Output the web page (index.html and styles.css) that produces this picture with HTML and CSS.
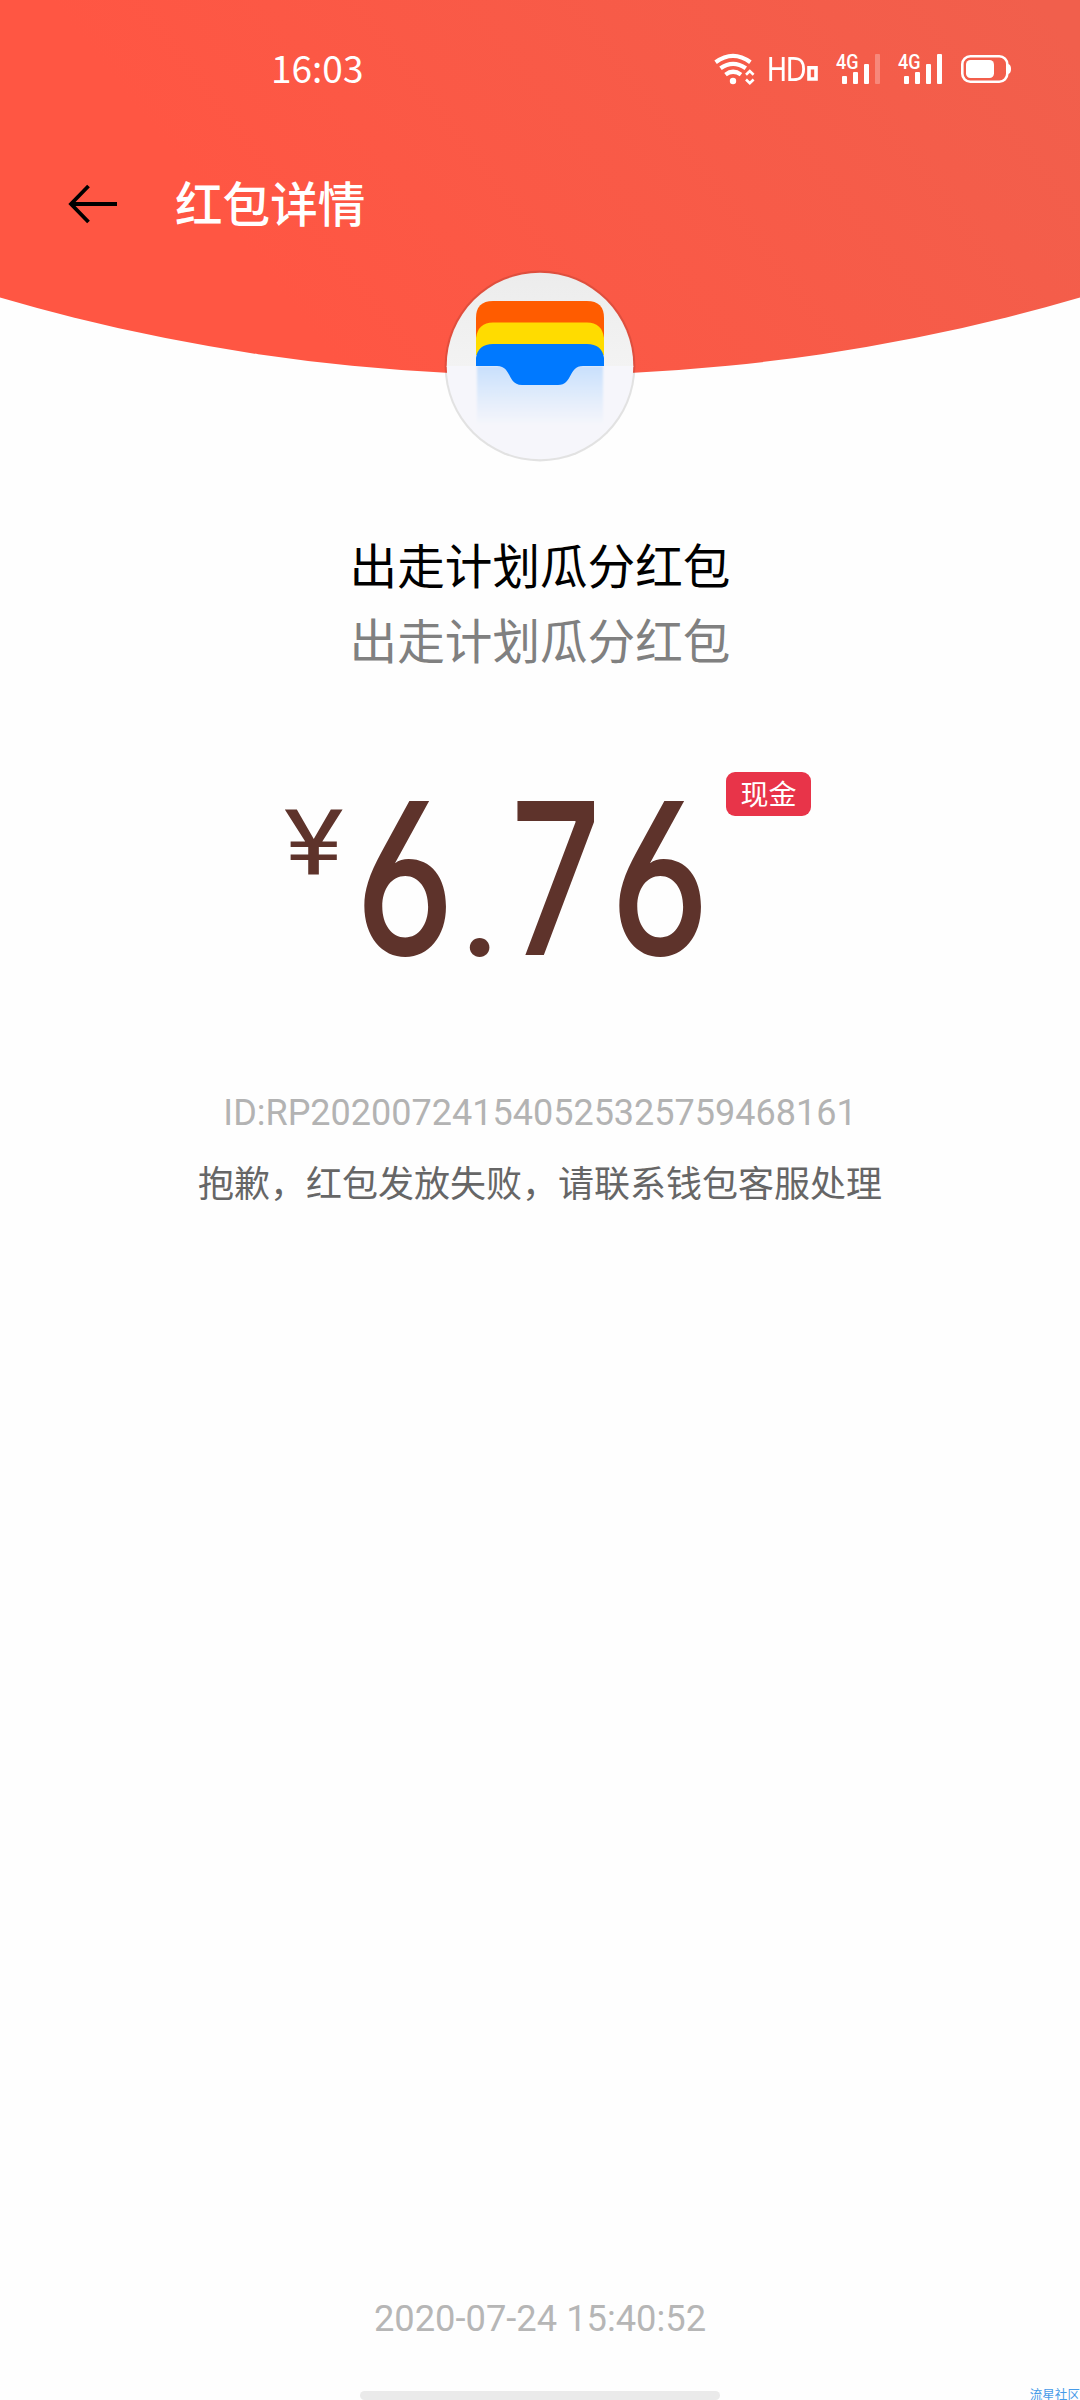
FILE: index.html
```html
<!DOCTYPE html>
<html lang="zh-CN">
<head>
<meta charset="utf-8">
<title>红包详情</title>
<link rel="stylesheet" href="styles.css">
</head>
<body>
<div class="screen">
  <header class="hero">
    <div class="status">
      <span class="clock">16:03</span>
      <svg class="status-icons" width="350" height="80" viewBox="0 0 350 80" fill="none" stroke="#fff">
        <g stroke-width="4.2">
          <path d="M25.6 32.2Q43 19.4 60.4 32.2"/>
          <path d="M30.5 38.3Q43 29.3 55.8 38.3"/>
          <path d="M35.5 44.6Q43 38.9 51 44.6"/>
        </g>
        <circle cx="43" cy="51" r="3.2" fill="#fff" stroke="none"/>
        <path d="M56 44.7L59.8 41L63.6 44.7M56 49.5L59.8 53.2L63.6 49.5" stroke-width="2.6"/>
        <path d="M80.7 27V51M93.2 27V51M80.7 38.7H93.2" stroke-width="2.8"/>
        <path d="M99.7 28.3H103.5C111 28.3 113.6 32 113.6 39C113.6 46 111 49.7 103.5 49.7H99.7Z" stroke-width="2.8"/>
        <path d="M119 37.8H126V49H119Z" stroke-width="3.6"/>
        <g class="network" fill="#fff" stroke="none">
          <text x="146" y="38.7" textLength="22.5" lengthAdjust="spacingAndGlyphs">4G</text>
          <rect x="152" y="46" width="5" height="8" rx="1"/>
          <rect x="163" y="42" width="5" height="12" rx="1"/>
          <rect x="174" y="34" width="5" height="20" rx="1"/>
          <rect x="185" y="24" width="5" height="30" rx="1" opacity=".27"/>
          <text x="208" y="38.7" textLength="22.5" lengthAdjust="spacingAndGlyphs">4G</text>
          <rect x="214" y="46" width="5" height="8" rx="1"/>
          <rect x="225" y="42" width="5" height="12" rx="1"/>
          <rect x="236" y="34" width="5" height="20" rx="1"/>
          <rect x="247" y="24" width="5" height="30" rx="1"/>
        </g>
        <rect x="272.3" y="26.3" width="45" height="25.4" rx="8" stroke-width="2.6"/>
        <rect x="276" y="30" width="28" height="18" rx="4.5" fill="#fff" stroke="none"/>
        <path d="M318 34Q321 34.5 321 39T318 44Z" fill="#fff" stroke="none"/>
      </svg>
    </div>
    <nav class="navbar">
      <svg class="back" width="50" height="40" viewBox="0 0 50 40" fill="none" stroke="#000" stroke-width="3.8">
        <path d="M49 20H3.5M20.5 2L3 20L20.5 38"/>
      </svg>
      <h1 class="nav-title">红包详情</h1>
    </nav>
  </header>

  <main class="content">
    <svg class="avatar" width="192" height="192" viewBox="0 0 192 192">
      <defs>
        <linearGradient id="fade" x1="0" y1="0" x2="0" y2="1">
          <stop offset="0" stop-color="#c8dffc"/><stop offset=".35" stop-color="#d9e8fc"/><stop offset="1" stop-color="#f5f6fb"/>
        </linearGradient>
        <linearGradient id="top" x1="0" y1="0" x2="0" y2="1">
          <stop offset="0" stop-color="#ececec"/><stop offset="1" stop-color="#f3f3f3"/>
        </linearGradient>
        <clipPath id="disc"><circle cx="96" cy="96" r="93.3"/></clipPath>
        <filter id="soft" x="-10%" y="-10%" width="120%" height="120%"><feGaussianBlur stdDeviation="1.2"/></filter>
      </defs>
      <circle cx="96" cy="96" r="95.4" fill="#000" fill-opacity=".11"/>
      <g clip-path="url(#disc)">
        <rect width="192" height="97" fill="url(#top)"/>
        <rect y="96" width="192" height="96" fill="#f6f6fb"/>
        <rect x="33" y="96" width="126" height="58" fill="url(#fade)" filter="url(#soft)"/>
        <path d="M32 75V48Q32 31 49 31H143Q160 31 160 48V75Z" fill="#ff5c00"/>
        <path d="M32 85V68Q34 52.5 49 52.5H143Q158 52.5 160 68V85Z" fill="#ffdc00"/>
        <path d="M32 96V88Q34 74 49 74H143Q158 74 160 88V96H139C124 96 129 115 114 115H78C63 115 68 96 53 96Z" fill="#0079ff"/>
      </g>
    </svg>
    <h2 class="sender">出走计划瓜分红包</h2>
    <p class="wish">出走计划瓜分红包</p>
    <div class="amount">
      <svg class="sum" width="430" height="170" viewBox="0 0 430 170">
        <text class="yen" x="4" y="80" textLength="59.5" lengthAdjust="spacingAndGlyphs">¥</text>
        <text class="digit" transform="translate(75 161) scale(.802 1)">6</text>
        <text class="digit point" transform="translate(179 162) scale(1.03 1)">.</text>
        <text class="digit" transform="translate(230.6 161) scale(.751 1)">7</text>
        <text class="digit" transform="translate(330 161) scale(.802 1)">6</text>
      </svg>
      <span class="tag">现金</span>
    </div>
    <p class="order">ID:RP202007241540525325759468161</p>
    <p class="message">抱歉，红包发放失败，请联系钱包客服处理</p>
  </main>

  <footer class="footer">
    <time class="date">2020-07-24 15:40:52</time>
    <div class="home-bar"></div>
    <span class="watermark">流星社区</span>
  </footer>
</div>
</body>
</html>
```
FILE: styles.css
```css
* { box-sizing: border-box; margin: 0; padding: 0; }

body {
  background: #fefefe;
  font-family: Roboto, "Noto Sans CJK SC", sans-serif;
}

.screen {
  position: relative;
  width: 1080px;
  height: 2400px;
  display: flex;
  flex-direction: column;
  overflow: hidden;
}

.hero {
  height: 375px;
  flex: none;
  background: linear-gradient(52deg, #ff5643 25%, #f15f4c 97%);
  clip-path: circle(1920px at 50% -1545px);
}

.status {
  display: flex;
  justify-content: space-between;
  height: 110px;
  padding: 30px 40px 0 271px;
}

.clock {
  margin-top: -3px;
  color: #fff;
  font: 37px/80px "Noto Sans CJK SC", sans-serif;
}

.network { font: 500 21px Roboto, sans-serif; }

.navbar {
  display: flex;
  align-items: center;
  gap: 57px;
  height: 188px;
  padding: 0 68px;
}

.nav-title {
  margin-top: -5px;
  color: #fff;
  font: 500 47.6px/72px "Noto Sans CJK SC", sans-serif;
}

.content {
  display: flex;
  flex-direction: column;
  align-items: center;
  flex: 1;
}

.avatar {
  position: relative;
  margin-top: -105px;
}

.sender, .wish {
  font: 400 47.6px/75px "Noto Sans CJK SC", sans-serif;
}

.sender { margin-top: 64px; color: #000; }
.wish { color: #808080; }

.amount {
  display: flex;
  align-items: flex-start;
  width: 540px;
  margin-top: 96px;
}

.sum {
  flex: none;
  margin: 22px 0 0 10px;
  overflow: visible;
  fill: #5e332b;
}

.yen { font: 400 91px Roboto, sans-serif; }

.digit {
  font: 500 211px Inter, sans-serif;
  font-feature-settings: "cv03";
}

.point { font-size: 132px; }

.tag {
  flex: none;
  width: 85px;
  height: 44px;
  margin-left: 16px;
  border-radius: 9px;
  background: #e83449;
  color: #fff;
  font: 28px/43px "Noto Sans CJK SC", sans-serif;
  text-align: center;
}

.order {
  margin-top: 125px;
  color: #b3b3b3;
  font-size: 36px;
  line-height: 48px;
}

.message {
  margin-top: 17px;
  color: #666;
  font: 36px/54px "Noto Sans CJK SC", sans-serif;
}

.footer {
  position: relative;
  display: flex;
  flex-direction: column;
  align-items: center;
  justify-content: space-between;
  height: 105px;
}

.date { color: #b6b6b6; font-size: 36.3px; line-height: 48px; }

.home-bar {
  width: 360px;
  height: 9px;
  border-radius: 5px;
  background: #eaeaea;
}

.watermark {
  position: absolute;
  right: 0;
  bottom: -3px;
  color: #469be8;
  font: 12.6px/18px "Noto Sans CJK SC", sans-serif;
}
```
